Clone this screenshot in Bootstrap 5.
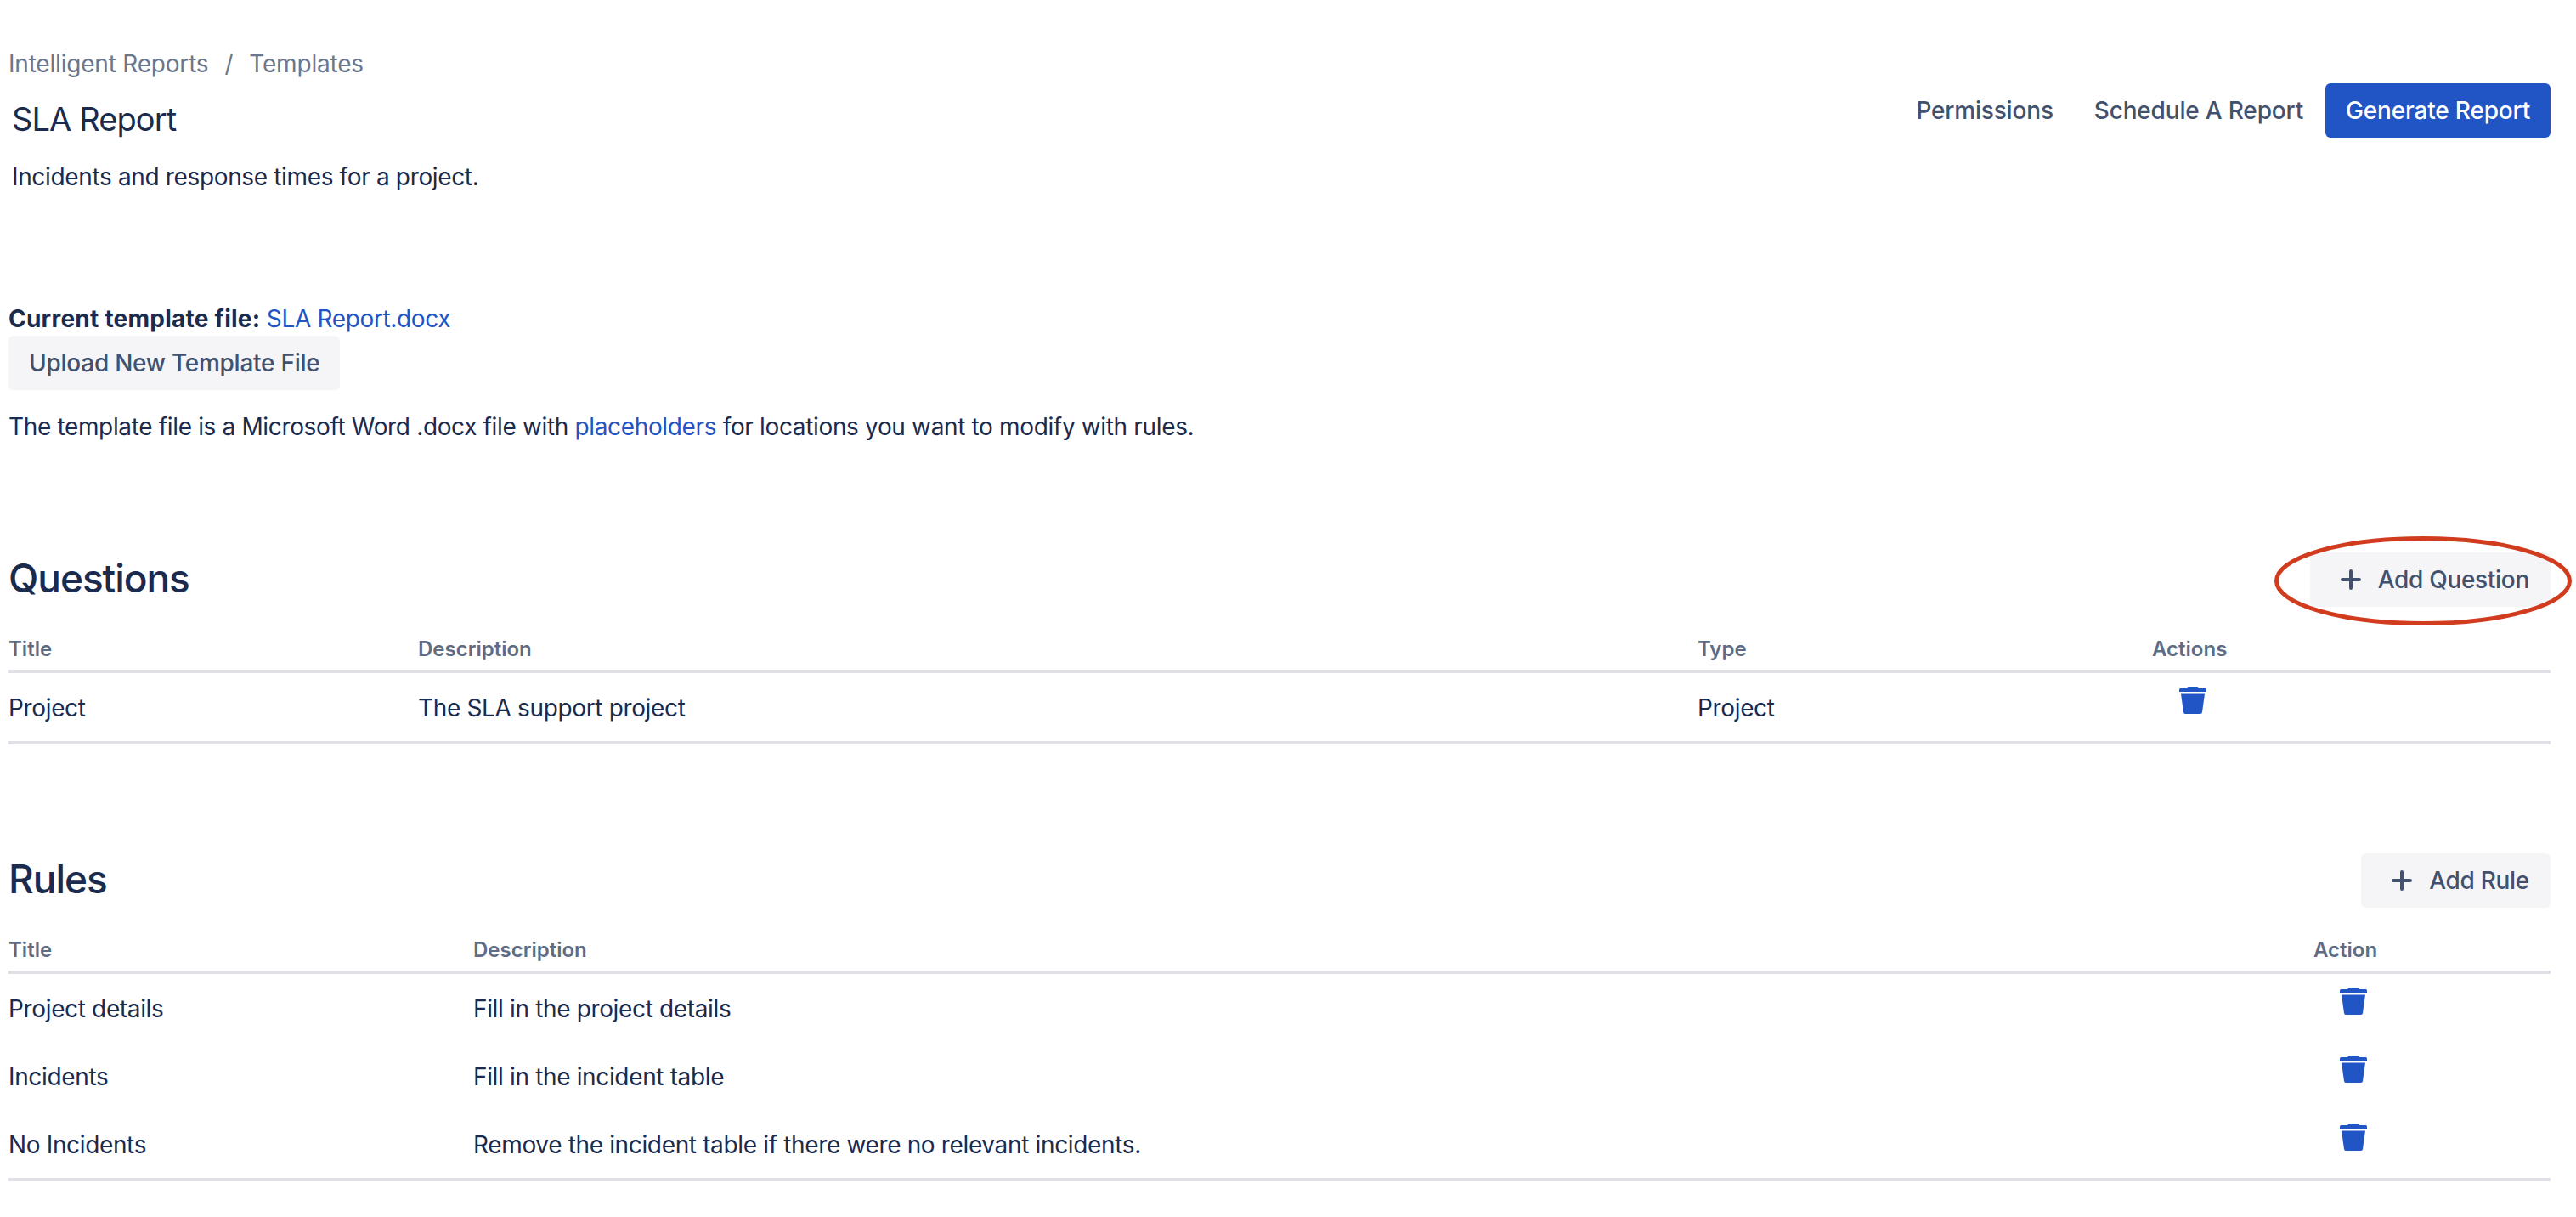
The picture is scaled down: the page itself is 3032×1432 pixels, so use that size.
<!DOCTYPE html>
<html lang="en">
<head>
<meta charset="utf-8">
<title>SLA Report</title>
<link href="https://cdn.jsdelivr.net/npm/bootstrap@5.3.0/dist/css/bootstrap.min.css" rel="stylesheet">
<style>
body{font-family:Inter,"Liberation Sans",sans-serif;font-size:28px;line-height:40px;letter-spacing:-.35px;color:#1a2b4e;background:#fff;padding:55px 30px 0 10px;}
a{color:#2154c5;text-decoration:none;}
.crumbs{--bs-breadcrumb-divider-color:#6b778c;--bs-breadcrumb-item-padding-x:19px;--bs-breadcrumb-margin-bottom:0;font-size:28px;line-height:40px;letter-spacing:-.2px;}
.crumbs a,.crumbs .active,.crumbs .breadcrumb-item::before{color:#6b778c;}
.head-row{margin-top:3px;}
.page-title{font-size:38px;line-height:64px;font-weight:400;letter-spacing:-.9px;margin:10px 0 0 4px;color:#1a2b4e;}
.page-desc{margin:16px 0 0 4px;}
.action-btn{font-size:28px;font-weight:500;line-height:64px;height:64px;padding:0 24px;border:0;border-radius:6px;color:#42526e;background:transparent;letter-spacing:-.18px;}
.action-btn.soft{background:#f5f5f8;letter-spacing:-.26px;}
.action-btn.solid{background:#2154c5;color:#fff;margin-left:2px;}
.action-btn.icon-btn{display:inline-flex;align-items:center;gap:20px;padding:0 25px 0 36px;letter-spacing:-.3px;}
.plus-icon{width:24px;height:24px;flex:none;}
.tpl-block{margin-top:127px;}
.tpl-block p{margin:0;}
.tpl-label{font-weight:700;letter-spacing:.24px;}
.tpl-note{margin-top:23px!important;}
.sec-head{height:64px;}
.sec-title{font-size:46px;line-height:60px;padding-bottom:4px;font-weight:500;letter-spacing:-1.05px;margin:0;color:#1a2b4e;}
.q-sec{margin-top:128px;}
.r-sec{margin-top:128px;}
.ring-wrap{position:relative;}
.ring{position:absolute;left:-42px;top:-19px;width:350px;height:105px;pointer-events:none;}
.data-table{table-layout:fixed;width:100%;margin:0;border-collapse:separate;border-spacing:0;--bs-table-color:#1a2b4e;--bs-table-bg:transparent;}
.data-table th{font-size:24px;line-height:28px;font-weight:600;letter-spacing:0;color:#5e6c84;padding:36px 0 10px;border-bottom:4px solid #dfe1e6;}
.data-table td{font-size:28px;line-height:40px;height:80px;padding:2px 0 0;vertical-align:middle;border:0;}
.data-table tbody tr:last-child td{border-bottom:4px solid #dfe1e6;height:84px;}
.trash{display:block;width:32px;height:32px;margin-left:32px;margin-top:-18px;}
.r-sec .trash{margin-left:31px;}
.qc1{width:482px}.qc2{width:1506px}.qc3{width:535px}
.rc1{width:547px}.rc2{width:2166px}
</style>
</head>
<body>
<svg width="0" height="0" class="d-block position-absolute">
  <defs>
    <symbol id="bin" viewBox="0 0 32 32"><path fill="#2154c5" d="M11 0h10a1.500 1.500 0 0 1 1.500 2H30.500a1.500 1.500 0 0 1 1.500 1.500V6H0V3.500A1.500 1.500 0 0 1 1.500 2H9.500A1.500 1.500 0 0 1 11 0ZM2 8.500h28L27 30a2.200 2.200 0 0 1-2.200 2H7.200A2.200 2.200 0 0 1 5 30Z"/></symbol>
    <symbol id="plus" viewBox="0 0 24 24"><path d="M12 2v20M2 12h20" stroke="#42526e" stroke-width="4" stroke-linecap="round" fill="none"/></symbol>
  </defs>
</svg>

<nav aria-label="breadcrumb">
  <ol class="breadcrumb crumbs">
    <li class="breadcrumb-item"><a href="#">Intelligent Reports</a></li>
    <li class="breadcrumb-item active" aria-current="page"><a href="#">Templates</a></li>
  </ol>
</nav>

<div class="d-flex justify-content-between align-items-start head-row">
  <h1 class="page-title">SLA Report</h1>
  <div class="d-flex gap-0">
    <button type="button" class="btn action-btn">Permissions</button>
    <button type="button" class="btn action-btn">Schedule A Report</button>
    <button type="button" class="btn action-btn solid">Generate Report</button>
  </div>
</div>
<p class="page-desc">Incidents and response times for a project.</p>

<div class="tpl-block">
  <p><span class="tpl-label">Current template file:</span> <a href="#">SLA Report.docx</a></p>
  <button type="button" class="btn action-btn soft">Upload New Template File</button>
  <p class="tpl-note">The template file is a Microsoft Word .docx file with <a href="#">placeholders</a> for locations you want to modify with rules.</p>
</div>

<section class="q-sec">
  <div class="d-flex justify-content-between align-items-center sec-head">
    <h2 class="sec-title">Questions</h2>
    <div class="ring-wrap">
      <button type="button" class="btn action-btn soft icon-btn"><svg class="plus-icon"><use href="#plus"/></svg>Add Question</button>
      <svg class="ring" viewBox="0 0 350 105"><ellipse cx="175" cy="52.500" rx="172.500" ry="50" fill="none" stroke="#d13c1f" stroke-width="5"/></svg>
    </div>
  </div>
  <table class="table data-table">
    <colgroup><col class="qc1"><col class="qc2"><col class="qc3"><col></colgroup>
    <thead><tr><th>Title</th><th>Description</th><th>Type</th><th>Actions</th></tr></thead>
    <tbody><tr><td>Project</td><td>The SLA support project</td><td>Project</td><td><svg class="trash"><use href="#bin"/></svg></td></tr></tbody>
  </table>
</section>

<section class="r-sec">
  <div class="d-flex justify-content-between align-items-center sec-head">
    <h2 class="sec-title">Rules</h2>
    <button type="button" class="btn action-btn soft icon-btn"><svg class="plus-icon"><use href="#plus"/></svg>Add Rule</button>
  </div>
  <table class="table data-table">
    <colgroup><col class="rc1"><col class="rc2"><col></colgroup>
    <thead><tr><th>Title</th><th>Description</th><th>Action</th></tr></thead>
    <tbody>
      <tr><td>Project details</td><td>Fill in the project details</td><td><svg class="trash"><use href="#bin"/></svg></td></tr>
      <tr><td>Incidents</td><td>Fill in the incident table</td><td><svg class="trash"><use href="#bin"/></svg></td></tr>
      <tr><td>No Incidents</td><td>Remove the incident table if there were no relevant incidents.</td><td><svg class="trash"><use href="#bin"/></svg></td></tr>
    </tbody>
  </table>
</section>
</body>
</html>
